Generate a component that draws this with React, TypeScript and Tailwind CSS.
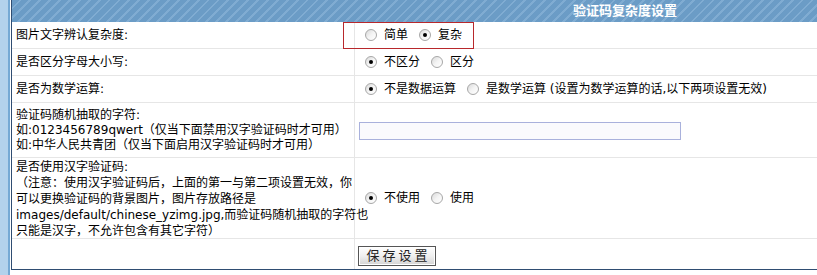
import type { ReactNode } from "react";

const Radio = ({ checked }: { checked?: boolean }) => (
  <span className="inline-flex h-[12px] w-[12px] shrink-0 items-center justify-center rounded-full border border-[#a7a7a7] bg-gradient-to-br from-[#d9d9d9] via-[#f4f4f4] to-white">
    {checked && <span className="h-[4px] w-[4px] rounded-full bg-black" />}
  </span>
);

const Option = ({ checked, label }: { checked?: boolean; label: string }) => (
  <span className="mr-[11px] inline-flex items-center gap-[7px]">
    <Radio checked={checked} />
    <span className="whitespace-nowrap">{label}</span>
  </span>
);

const Row = ({ label, className, children }: { label: ReactNode; className: string; children?: ReactNode }) => (
  <div className={`flex border-b border-[#e6e6e6] ${className}`}>
    <div className="flex w-[343px] shrink-0 items-center border-r border-[#e6e6e6] pl-[4px] leading-[16px] whitespace-nowrap">
      {label}
    </div>
    <div className="flex flex-1 items-center pl-[10px]">{children}</div>
  </div>
);

export default function App() {
  return (
    <div className="flex h-[275px] w-[817px] overflow-hidden bg-white text-[12px] text-black font-['DejaVu_Sans','Noto_Sans_CJK_SC',sans-serif]">
      {/* page frame on the left */}
      <div className="w-[8px] shrink-0 bg-[#b3d2ec]" />
      <div className="w-[2px] shrink-0 bg-[#75a9d4]" />
      <div className="w-[1px] shrink-0 bg-white" />

      <div className="relative w-[1227px] shrink-0 self-start border-b border-l border-[#2f4d72]">
        <div className="flex h-[22px] items-center justify-center bg-[repeating-linear-gradient(135deg,#6b9cc6_0px,#6b9cc6_5px,#80acd2_5px,#80acd2_7px)] text-[13px] font-bold text-white">
          验证码复杂度设置
        </div>

        <Row label="图片文字辨认复杂度:" className="h-[27px]">
          <Option label="简单" />
          <Option checked label="复杂" />
        </Row>

        <Row label="是否区分字母大小写:" className="h-[27px]">
          <Option checked label="不区分" />
          <Option label="区分" />
        </Row>

        <Row label="是否为数学运算:" className="h-[27px]">
          <Option checked label="不是数据运算" />
          <Option label="是数学运算 (设置为数学运算的话,以下两项设置无效)" />
        </Row>

        <Row
          className="h-[55px]"
          label={
            <div className="leading-[15px]">
              验证码随机抽取的字符:
              <br />
              如:0123456789qwert（仅当下面禁用汉字验证码时才可用）
              <br />
              如:中华人民共青团（仅当下面启用汉字验证码时才可用）
            </div>
          }
        >
          <div className="-ml-[6px] mt-[1px] h-[18px] w-[322px] border border-[#a9b1dc] bg-[#fafafd]" />
        </Row>

        <Row
          className="h-[81px]"
          label={
            <div className="mt-[2px]">
              是否使用汉字验证码:
              <br />
              （注意：使用汉字验证码后，上面的第一与第二项设置无效，你
              <br />
              可以更换验证码的背景图片，图片存放路径是
              <br />
              images/default/chinese_yzimg.jpg,而验证码随机抽取的字符也
              <br />
              只能是汉字，不允许包含有其它字符）
            </div>
          }
        >
          <Option checked label="不使用" />
          <Option label="使用" />
        </Row>

        <div className="flex h-[30px] items-center">
          <div className="h-full w-[343px] shrink-0 border-r border-[#e6e6e6]" />
          <button className="ml-[3px] mt-[4px] h-[20px] w-[78px] border border-[#555] bg-gradient-to-b from-white via-[#efefef] to-[#d4d4d4] pl-[3px] text-[13px] leading-[18px] tracking-[3px] text-[#222] shadow-[inset_0_0_0_1px_#fff]">
            保存设置
          </button>
        </div>

        {/* highlight round the first option */}
        <div className="absolute left-[331px] top-[22px] h-[27px] w-[131px] border border-[#b8282c]" />
      </div>
    </div>
  );
}
